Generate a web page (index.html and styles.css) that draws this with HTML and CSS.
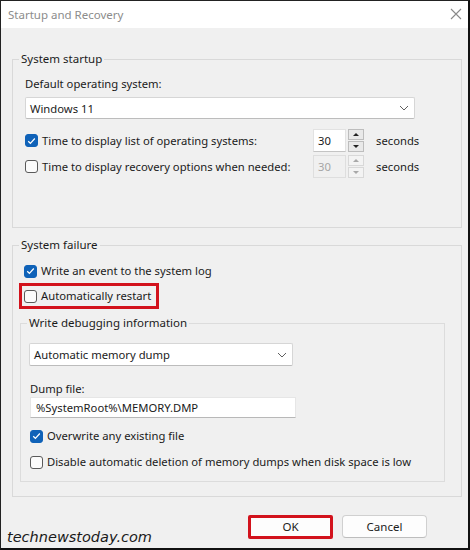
FILE: index.html
```html
<!DOCTYPE html>
<html lang="en">
<head>
<meta charset="utf-8">
<title>Startup and Recovery</title>
<link rel="stylesheet" href="styles.css">
</head>
<body>
<div class="window">
  <div class="titlebar">
    <span class="title">Startup and Recovery</span>
    <svg class="close" width="12" height="12" viewBox="0 0 12 12"><path d="M1 1L11 11M11 1L1 11" stroke="#8a8a8a" stroke-width="1.1" fill="none"/></svg>
  </div>
  <div class="content">
    <fieldset class="group startup">
      <legend>System startup</legend>
      <div class="field-label">Default operating system:</div>
      <div class="select os-select">
        <span>Windows 11</span>
        <svg class="chev" width="10" height="6" viewBox="0 0 10 6"><path d="M1 1L5 5L9 1" stroke="#606060" stroke-width="1" fill="none"/></svg>
      </div>
      <div class="timer-row first">
        <label class="check timer-label"><span class="box on"><svg width="9" height="8" viewBox="0 0 9 8"><path d="M1.2 4.2L3.4 6.3L7.8 1.5" stroke="#fff" stroke-width="1.2" fill="none"/></svg></span>Time to display list of operating systems:</label>
        <div class="spin">
          <span class="spin-input">30</span>
          <span class="spin-btns"><span class="arrow up"></span><span class="arrow down"></span></span>
        </div>
        <span class="unit">seconds</span>
      </div>
      <div class="timer-row">
        <label class="check timer-label"><span class="box"></span>Time to display recovery options when needed:</label>
        <div class="spin disabled">
          <span class="spin-input">30</span>
          <span class="spin-btns"><span class="arrow up"></span><span class="arrow down"></span></span>
        </div>
        <span class="unit">seconds</span>
      </div>
    </fieldset>

    <fieldset class="group failure">
      <legend>System failure</legend>
      <label class="check row-log"><span class="box on"><svg width="9" height="8" viewBox="0 0 9 8"><path d="M1.2 4.2L3.4 6.3L7.8 1.5" stroke="#fff" stroke-width="1.2" fill="none"/></svg></span>Write an event to the system log</label>
      <div class="highlight restart">
        <label class="check"><span class="box"></span>Automatically restart</label>
      </div>
      <fieldset class="group debug">
        <legend>Write debugging information</legend>
        <div class="select dump-select">
          <span>Automatic memory dump</span>
          <svg class="chev" width="10" height="6" viewBox="0 0 10 6"><path d="M1 1L5 5L9 1" stroke="#606060" stroke-width="1" fill="none"/></svg>
        </div>
        <div class="field-label dump-label">Dump file:</div>
        <div class="textbox">%SystemRoot%\MEMORY.DMP</div>
        <label class="check row-overwrite"><span class="box on"><svg width="9" height="8" viewBox="0 0 9 8"><path d="M1.2 4.2L3.4 6.3L7.8 1.5" stroke="#fff" stroke-width="1.2" fill="none"/></svg></span>Overwrite any existing file</label>
        <label class="check row-disable"><span class="box"></span>Disable automatic deletion of memory dumps when disk space is low</label>
      </fieldset>
    </fieldset>

    <div class="footer">
      <span class="watermark">technewstoday.com</span>
      <div class="buttons">
        <button class="btn ok">OK</button>
        <button class="btn">Cancel</button>
      </div>
    </div>
  </div>
</div>
</body>
</html>
```

FILE: styles.css
```css
* { box-sizing: border-box; }

html, body {
  margin: 0;
  padding: 0;
  background: #f0f0f0;
}

body {
  font-family: "Noto Sans", "Open Sans", sans-serif;
  font-size: 11.25px;
  color: #1b1b1b;
}

.window {
  width: 470px;
  height: 550px;
  background: #f0f0f0;
  border-top: 1px solid #222;
  border-left: 1px solid #222;
  border-right: 2px solid #111;
  border-bottom: 2px solid #111;
  display: flex;
  flex-direction: column;
  overflow: hidden;
}

.titlebar {
  height: 27px;
  background: #ffffff;
  display: flex;
  align-items: center;
  justify-content: space-between;
  padding: 0 6px 0 7px;
  flex: none;
}

.title {
  color: #8c8c8c;
  font-size: 11.5px;
  margin-top: -1px;
}

.close { margin-top: -1px; }

.content {
  padding: 23px 6px 0 11px;
  display: flex;
  flex-direction: column;
}

.group {
  margin: 0;
  padding: 0;
  border: 1px solid #d9d9d9;
  min-width: 0;
}

.group > legend {
  padding: 0 2px;
  line-height: 16px;
  font-size: 11.5px;
}

.startup {
  width: 450px;
  padding: 0 12px 49px 12px;
}

.startup > legend { margin-left: -6px; }

.field-label {
  line-height: 16px;
  margin-top: 9px;
}

.select {
  background: #fff;
  border: 1px solid #d6d6d6;
  border-bottom-color: #bcbcbc;
  border-radius: 2px;
  display: flex;
  align-items: center;
  justify-content: space-between;
  padding: 0 5px 0 4px;
}

.os-select {
  width: 390px;
  height: 22px;
  margin-top: 5px;
}

.timer-row {
  display: flex;
  align-items: center;
  height: 23px;
  margin-top: 3px;
}

.timer-row.first { margin-top: 10px; }

.timer-label { width: 288px; }

.check {
  display: flex;
  align-items: center;
  line-height: 16px;
  white-space: nowrap;
}

.box {
  width: 13px;
  height: 13px;
  border: 1px solid #5a5a5a;
  border-radius: 3px;
  background: #fbfbfb;
  margin-right: 4px;
  display: inline-flex;
  align-items: center;
  justify-content: center;
  flex: none;
}

.box.on {
  background: #0f62b8;
  border-color: #0f62b8;
}

.spin {
  display: flex;
  align-items: stretch;
  height: 23px;
}

.spin-input {
  width: 33px;
  background: #fff;
  border: 1px solid #e2e2e2;
  border-bottom-color: #c4c4c4;
  padding-left: 4px;
  display: flex;
  align-items: center;
}

.spin-btns {
  width: 16px;
  margin-left: 2px;
  display: flex;
  flex-direction: column;
  gap: 1px;
}

.arrow {
  flex: 1;
  background: #e9e9e9;
  border: 1px solid #bdbdbd;
  display: flex;
  align-items: center;
  justify-content: center;
}

.arrow::after {
  content: "";
  width: 0;
  height: 0;
  border-left: 3px solid transparent;
  border-right: 3px solid transparent;
}

.arrow.up::after { border-bottom: 3px solid #222; }
.arrow.down::after { border-top: 3px solid #222; }

.spin.disabled .spin-input {
  background: #f0f0f0;
  border-color: #dedede;
  color: #a6a6a6;
}

.spin.disabled .arrow {
  background: #f3f3f3;
  border-color: #d8d8d8;
}

.spin.disabled .arrow.up::after { border-bottom-color: #a8a8a8; }
.spin.disabled .arrow.down::after { border-top-color: #a8a8a8; }

.unit { margin-left: 12px; }

.failure {
  width: 450px;
  margin-top: 9px;
  padding: 0 16px 14px 11px;
}

.failure > legend { margin-left: -5px; }

.row-log { margin-top: 10px; }

.highlight {
  border: 3px solid #d2121c;
  align-self: flex-start;
  width: 140px;
  margin: 4px 0 0 -5px;
  padding: 2px 0 2px 2px;
}

.debug {
  margin: 6px 0 0 -4px;
  padding: 0 9px 11px 9px;
  border-color: #dcdcdc;
}

.debug > legend { margin-left: -3px; }

.dump-select {
  width: 264px;
  height: 23px;
  margin: 12px 0 0 -1px;
}

.dump-label { margin-top: 15px; }

.textbox {
  width: 266px;
  height: 21px;
  background: #fff;
  border: 1px solid #e6e6e6;
  border-bottom-color: #b8b8b8;
  padding-left: 5px;
  display: flex;
  align-items: center;
}

.row-overwrite { margin-top: 10px; }
.row-disable { margin-top: 10px; }

.footer {
  display: flex;
  justify-content: space-between;
  height: 32px;
  margin-top: 18px;
}

.watermark {
  align-self: flex-end;
  margin-left: -5px;
  font-family: "DejaVu Sans", sans-serif;
  font-style: italic;
  font-size: 14.5px;
  line-height: 20px;
  color: #1a1a1a;
}

.buttons {
  display: flex;
  gap: 9px;
  align-self: flex-start;
  margin-right: 35px;
}

.btn {
  font-family: "Noto Sans", "Open Sans", sans-serif;
  font-size: 11.5px;
  color: #1b1b1b;
  background: #fdfdfd;
  border: 1px solid #d0d0d0;
  border-bottom-color: #bdbdbd;
  border-radius: 4px;
  width: 85px;
  height: 23px;
  padding: 0;
  line-height: 16px;
}

.btn.ok {
  border: 3px solid #d2121c;
  border-radius: 2px;
  height: 24px;
}
```
